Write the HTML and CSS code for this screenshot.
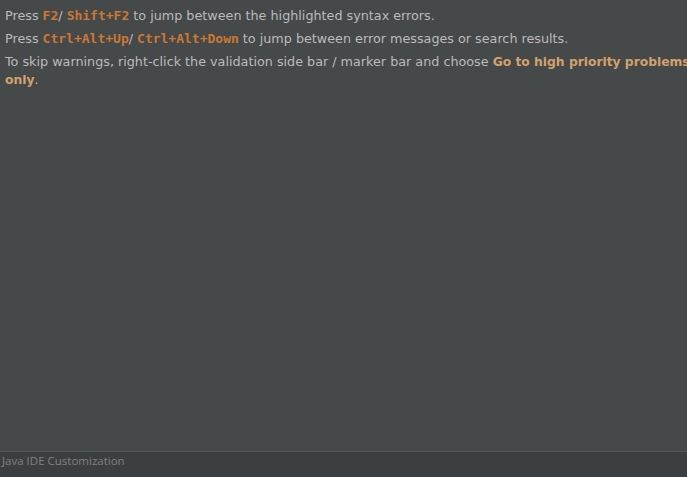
FILE: index.html
```html
<!DOCTYPE html>
<html>
<head>
<meta charset="utf-8">
<link rel="stylesheet" href="styles.css">
</head>
<body>
<div class="page">
  <main class="tip">
    <p>Press <code>F2</code>/ <code>Shift+F2</code> to jump between the highlighted syntax errors.</p>
    <p>Press <code>Ctrl+Alt+Up</code>/ <code>Ctrl+Alt+Down</code> to jump between error messages or search results.</p>
    <p>To skip warnings, right-click the validation side bar / marker bar and choose <b>Go to high priority problems only</b>.</p>
  </main>
  <footer class="footer">Java IDE Customization</footer>
</div>
</body>
</html>
```
FILE: styles.css
```css
html, body {
  margin: 0;
  padding: 0;
  height: 100%;
  overflow: hidden;
}
body {
  background: #45494a;
}
.page {
  display: flex;
  flex-direction: column;
  height: 100%;
}
.tip {
  flex: 1;
  overflow: hidden;
  padding: 7px 0 0 5px;
  font-family: "DejaVu Sans", Verdana, sans-serif;
  font-size: 12.75px;
  line-height: 17px;
  color: #bbbbbb;
}
.tip p {
  margin: 0 0 6px 0;
  width: 700px;
}
.tip code {
  font-family: "DejaVu Sans Mono", monospace;
  font-weight: bold;
  font-size: 13px;
  line-height: 1;
  color: #cc7832;
}
.tip b {
  font-size: 12.3px;
  color: #d4a16a;
}
.footer {
  height: 26px;
  box-sizing: border-box;
  border-top: 1px solid #555859;
  background: #3c3f41;
  padding: 1px 0 0 2px;
  font-family: "Open Sans", "Noto Sans", sans-serif;
  font-size: 11.5px;
  color: #808080;
}
```
